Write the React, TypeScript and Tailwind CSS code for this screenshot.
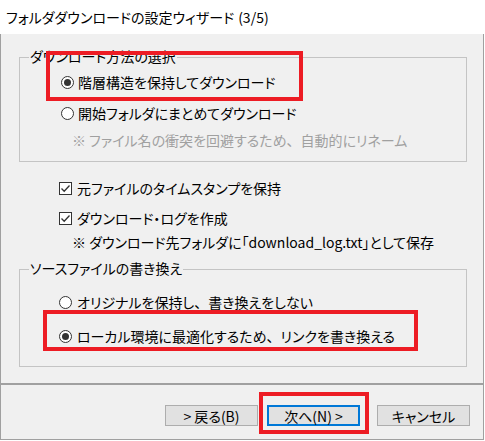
import React from "react"

const font = "font-['Noto_Sans_CJK_JP','Noto_Sans',sans-serif] [font-feature-settings:'palt']"

// Meiryo UI keeps punctuation full width while kana are proportional
function T({ children }: { children: string }) {
  const parts = children.split(/([、「」])/)
  return (
    <span>
      {parts.map((p, i) =>
        /^[、「」]$/.test(p) ? (
          <span key={i} className="[font-feature-settings:normal]">
            {p}
          </span>
        ) : (
          p
        )
      )}
    </span>
  )
}

function Radio({ checked }: { checked?: boolean }) {
  return (
    <span className="flex h-[13px] w-[13px] shrink-0 items-center justify-center rounded-full border border-[#333] bg-white">
      {checked && <span className="h-[7px] w-[7px] rounded-full bg-[#333]" />}
    </span>
  )
}

function Check() {
  return (
    <span className="flex h-[13px] w-[13px] shrink-0 items-center justify-center border border-[#333] bg-white">
      <svg width="11" height="11" viewBox="0 0 11 11">
        <path d="M1.5 5.5 L4.2 8.3 L9.5 2.5" fill="none" stroke="#333" strokeWidth="1.3" />
      </svg>
    </span>
  )
}

function Button({ label, focus }: { label: string; focus?: boolean }) {
  return (
    <div
      className={
        "flex h-[21px] w-[93px] items-center justify-center bg-[#e1e1e1] text-[14px] text-black " +
        (focus ? "border-2 border-[#0078d7]" : "border border-[#adadad]")
      }
    >
      {label}
    </div>
  )
}

export default function App() {
  return (
    <div className={`relative h-[441px] w-[485px] bg-white text-[14px] leading-none text-black ${font}`}>
      {/* Title */}
      <div className="flex h-[34px] items-center px-[6px] text-[14px]">
        <span>フォルダダウンロードの設定ウィザード</span>
        <span className="ml-[4px]">(3/5)</span>
      </div>

      <div className="w-[484px] border-x border-[#a0a0a0] bg-[#f0f0f0]">
        {/* Upper panel */}
        <div className="h-[351px] border-b-2 border-[#a0a0a0] pl-[18px] pt-[23px]">
          {/* Group 1 */}
          <div className="relative h-[105px] w-[448px] border border-[#c4c4c4]">
            <span className="absolute left-[9px] top-[-9px] bg-[#f0f0f0] px-[1px]">ダウンロード方法の選択</span>
            <div className="ml-[41px] mt-[14px] flex h-[20px] items-center gap-[4px]">
              <Radio checked />
              <span>階層構造を保持してダウンロード</span>
            </div>
            <div className="ml-[41px] mt-[11px] flex h-[20px] items-center gap-[4px]">
              <Radio />
              <span>開始フォルダにまとめてダウンロード</span>
            </div>
            <div className="ml-[52px] mt-[7px] flex h-[20px] items-center text-[#a0a0a0]">
              <T>※ ファイル名の衝突を回避するため、自動的にリネーム</T>
            </div>
          </div>

          <div className="ml-[40px] mt-[16px] flex h-[20px] items-center gap-[5px]">
            <Check />
            <span>元ファイルのタイムスタンプを保持</span>
          </div>
          <div className="ml-[40px] mt-[10px] flex h-[20px] items-center gap-[5px]">
            <Check />
            <span>ダウンロード・ログを作成</span>
          </div>
          <div className="ml-[53px] mt-[4px] flex h-[20px] items-center">
            ※ ダウンロード先フォルダに「download_log.txt」として保存
          </div>

          {/* Group 2 */}
          <div className="relative mt-[17px] h-[98px] w-[448px] border border-[#c4c4c4]">
            <span className="absolute left-[9px] top-[-9px] bg-[#f0f0f0] px-[1px]">ソースファイルの書き換え</span>
            <div className="ml-[39px] mt-[22px] flex h-[20px] items-center gap-[5px]">
              <Radio />
              <T>オリジナルを保持し、書き換えをしない</T>
            </div>
            <div className="ml-[39px] mt-[14px] flex h-[20px] items-center gap-[5px]">
              <Radio checked />
              <T>ローカル環境に最適化するため、リンクを書き換える</T>
            </div>
          </div>
        </div>

        {/* Buttons */}
        <div className="flex h-[55px] items-start border-b border-[#a0a0a0] pl-[164px] pt-[20px]">
          <Button label="> 戻る(B)" />
          <div className="ml-[9px]">
            <Button label="次へ(N) >" focus />
          </div>
          <div className="ml-[17px]">
            <Button label="キャンセル" />
          </div>
        </div>
      </div>

      {/* Annotation boxes */}
      <div className="absolute left-[46px] top-[51px] h-[50px] w-[257px] border-[4px] border-[#ed1c24]" />
      <div className="absolute left-[43px] top-[310px] h-[41px] w-[375px] border-[4px] border-[#ed1c24]" />
      <div className="absolute left-[259px] top-[392px] h-[42px] w-[110px] border-[4px] border-[#ed1c24]" />
    </div>
  )
}
